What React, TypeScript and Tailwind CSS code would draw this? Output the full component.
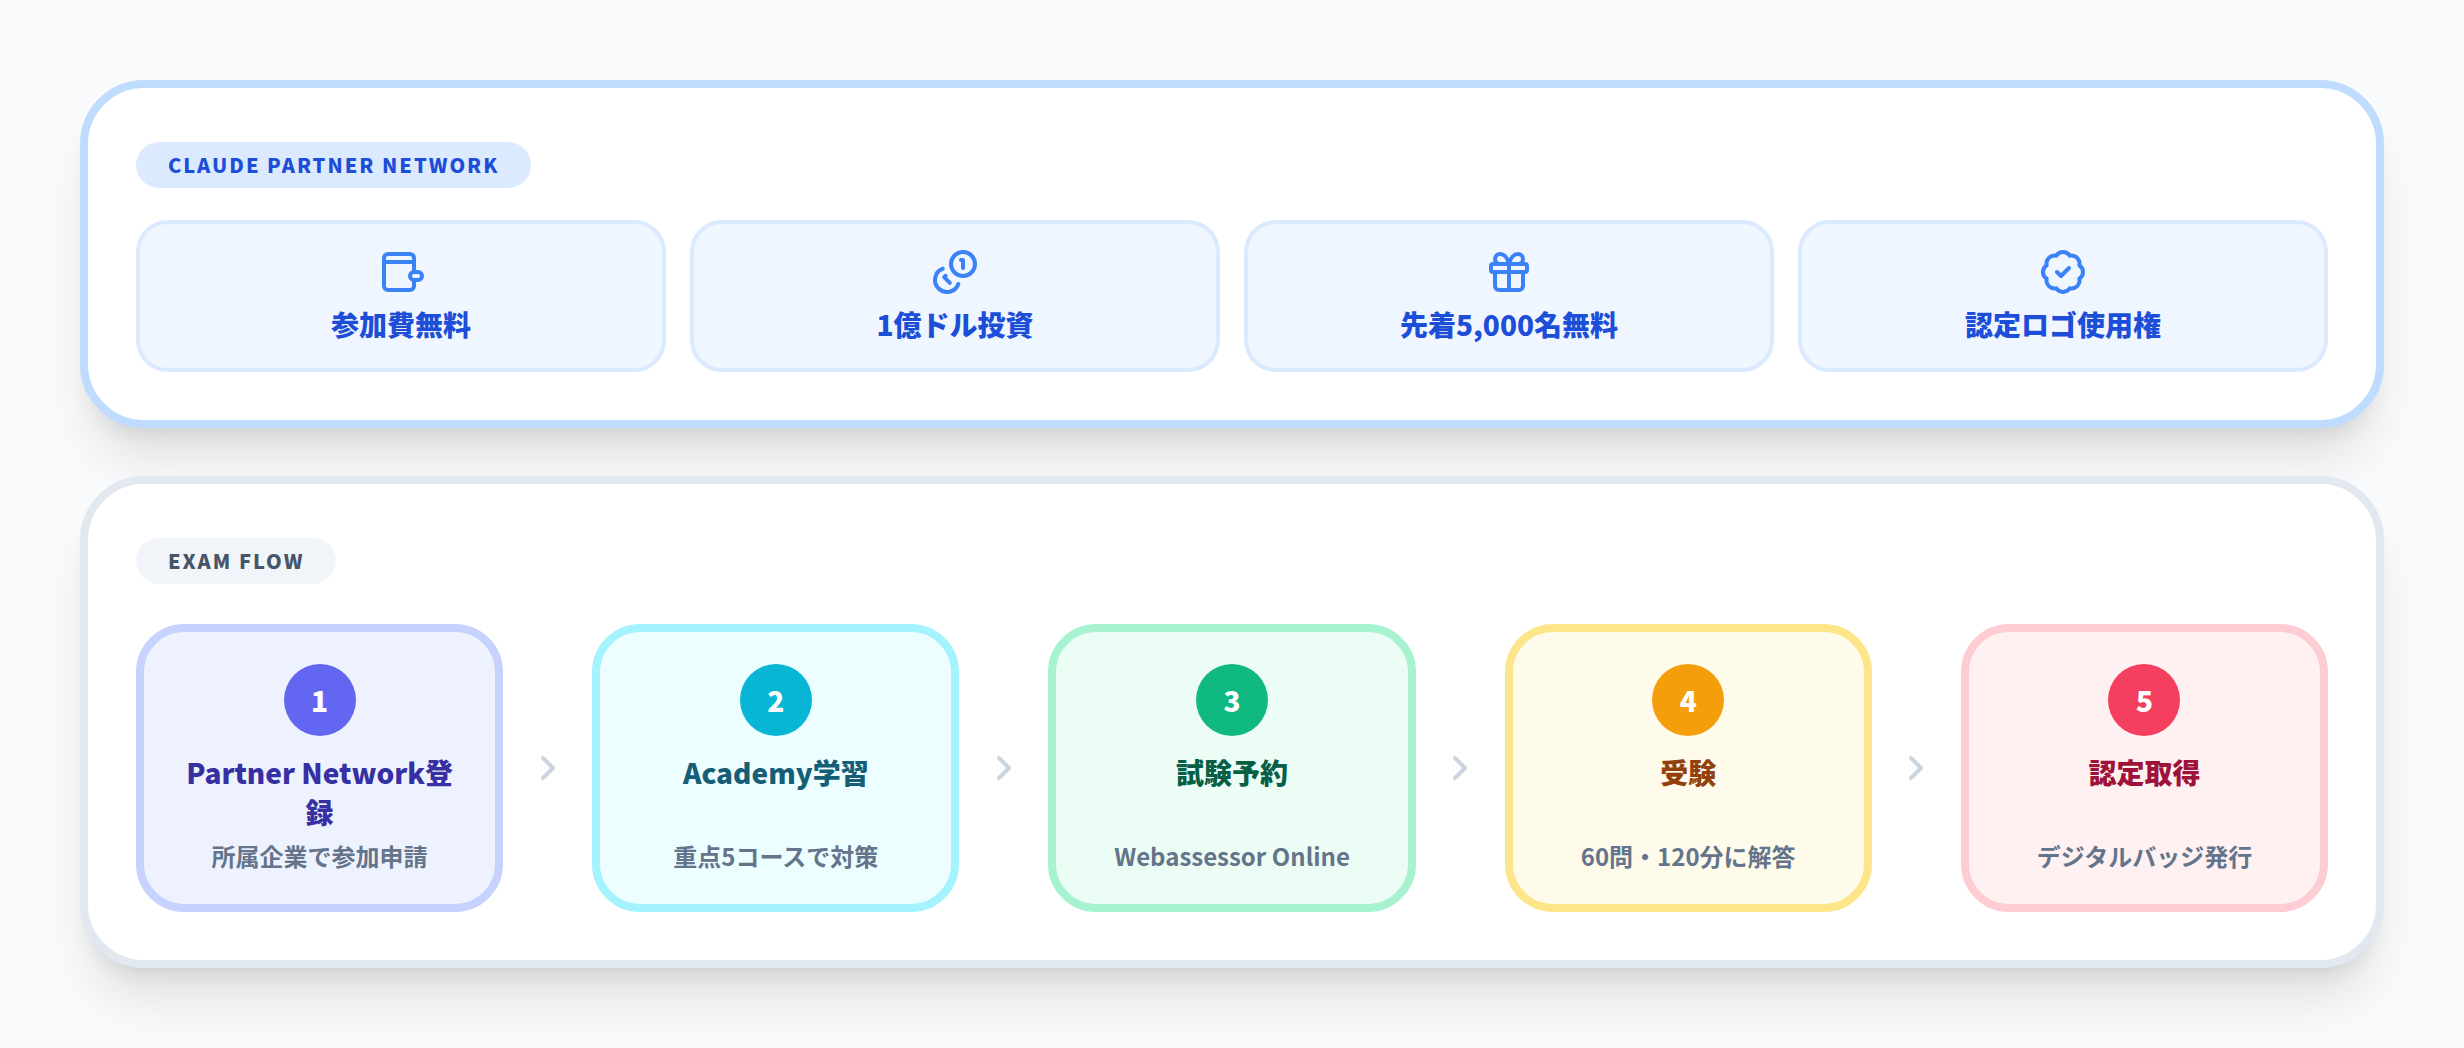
import React from "react";
import { BadgeCheck, ChevronRight, Gift } from "lucide-react";

const perks = [
  { label: "参加費無料", icon: "wallet" },
  { label: "1億ドル投資", icon: "coins" },
  { label: "先着5,000名無料", icon: "gift" },
  { label: "認定ロゴ使用権", icon: "badge" },
];

const steps = [
  { num: 1, title: "Partner Network登録", sub: "所属企業で参加申請", box: "border-[#c7d2fe] bg-[#eef2ff]", dot: "bg-[#6366f1]", text: "text-[#3730a3]" },
  { num: 2, title: "Academy学習", sub: "重点5コースで対策", box: "border-[#a5f3fc] bg-[#ecfeff]", dot: "bg-[#06b6d4]", text: "text-[#155e75]" },
  { num: 3, title: "試験予約", sub: "Webassessor Online", box: "border-[#a7f3d0] bg-[#ecfdf5]", dot: "bg-[#10b981]", text: "text-[#065f46]" },
  { num: 4, title: "受験", sub: "60問・120分に解答", box: "border-[#fde68a] bg-[#fffbeb]", dot: "bg-[#f59e0b]", text: "text-[#92400e]" },
  { num: 5, title: "認定取得", sub: "デジタルバッジ発行", box: "border-[#fecdd3] bg-[#fff1f2]", dot: "bg-[#f43f5e]", text: "text-[#9f1239]" },
];

const WalletIcon = () => (
  <svg width="48" height="48" viewBox="0 0 24 24" fill="none" stroke="currentColor" strokeWidth="2" strokeLinecap="round" strokeLinejoin="round">
    <rect x="3.5" y="3" width="15" height="18" rx="2" />
    <path d="M3.5 7H18.5" />
    <rect x="16.5" y="12" width="6" height="4" rx="2" fill="#eff6ff" />
  </svg>
);

const CoinsIcon = () => (
  <svg width="48" height="48" viewBox="0 0 24 24" fill="none" stroke="currentColor" strokeWidth="2" strokeLinecap="round" strokeLinejoin="round">
    <circle cx="16" cy="8" r="6" />
    <path d="M5.91 10.37A6 6 0 1 0 13.66 18" />
    <path d="M15 6h1v4" />
    <path d="m7.29 13.88-.7.71 2.82 2.82" />
  </svg>
);

const PerkIcon = ({ icon }: { icon: string }) => {
  if (icon === "wallet") return <WalletIcon />;
  if (icon === "coins") return <CoinsIcon />;
  if (icon === "gift") return <Gift size={48} />;
  return <BadgeCheck size={48} />;
};

const App: React.FC = () => {
  return (
    <div className="min-h-[1048px] bg-[#f8fafc] p-20 font-['Noto_Sans_CJK_JP','Noto_Sans',sans-serif]">
      <div className="flex flex-col gap-12">
        <section className="rounded-[64px] border-8 border-[#bfdbfe] bg-white p-12 shadow-[0_40px_50px_-10px_rgb(0_0_0/0.1),0_16px_20px_-12px_rgb(0_0_0/0.1)]">
          <div className="mt-1.5 flex">
            <span className="flex h-[46px] items-center rounded-full bg-[#dbeafe] px-8 text-[20px] font-black tracking-[2px] text-[#1d4ed8]">
              CLAUDE PARTNER NETWORK
            </span>
          </div>
          <div className="mt-8 grid grid-cols-4 gap-6">
            {perks.map((perk) => (
              <div key={perk.label} className="flex h-[152px] flex-col items-center gap-2 rounded-[32px] border-4 border-[#dbeafe] bg-[#eff6ff] p-6">
                <span className="text-[#3b82f6]">
                  <PerkIcon icon={perk.icon} />
                </span>
                <span className="text-[28px] leading-10 font-black whitespace-nowrap text-[#1d4ed8]">{perk.label}</span>
              </div>
            ))}
          </div>
        </section>

        <section className="rounded-[64px] border-8 border-[#e2e8f0] bg-white p-12 shadow-[0_40px_50px_-10px_rgb(0_0_0/0.1),0_16px_20px_-12px_rgb(0_0_0/0.1)]">
          <div className="mt-1.5 flex">
            <span className="flex h-[46px] items-center rounded-full bg-[#f1f5f9] px-8 text-[20px] font-black tracking-[2px] text-[#475569]">
              EXAM FLOW
            </span>
          </div>
          <div className="mt-10 flex items-center">
            {steps.map((step, index) => (
              <React.Fragment key={step.num}>
                {index > 0 && (
                  <div className="flex w-[89px] shrink-0 justify-center text-[#cbd5e1]">
                    <ChevronRight size={40} strokeWidth={2.4} />
                  </div>
                )}
                <div className={`flex h-[288px] flex-1 flex-col items-center rounded-[48px] border-8 px-8 pt-8 ${step.box}`}>
                  <div className={`flex h-[72px] w-[72px] items-center justify-center rounded-full text-[28px] font-black text-white ${step.dot}`}>
                    {step.num}
                  </div>
                  <div className={`mt-4 h-20 w-full text-center text-[28px] leading-10 font-black ${step.text}`}>{step.title}</div>
                  <div className="mt-2 text-[24px] leading-8 font-bold whitespace-nowrap text-[#64748b]">{step.sub}</div>
                </div>
              </React.Fragment>
            ))}
          </div>
        </section>
      </div>
    </div>
  );
};

export default App;
